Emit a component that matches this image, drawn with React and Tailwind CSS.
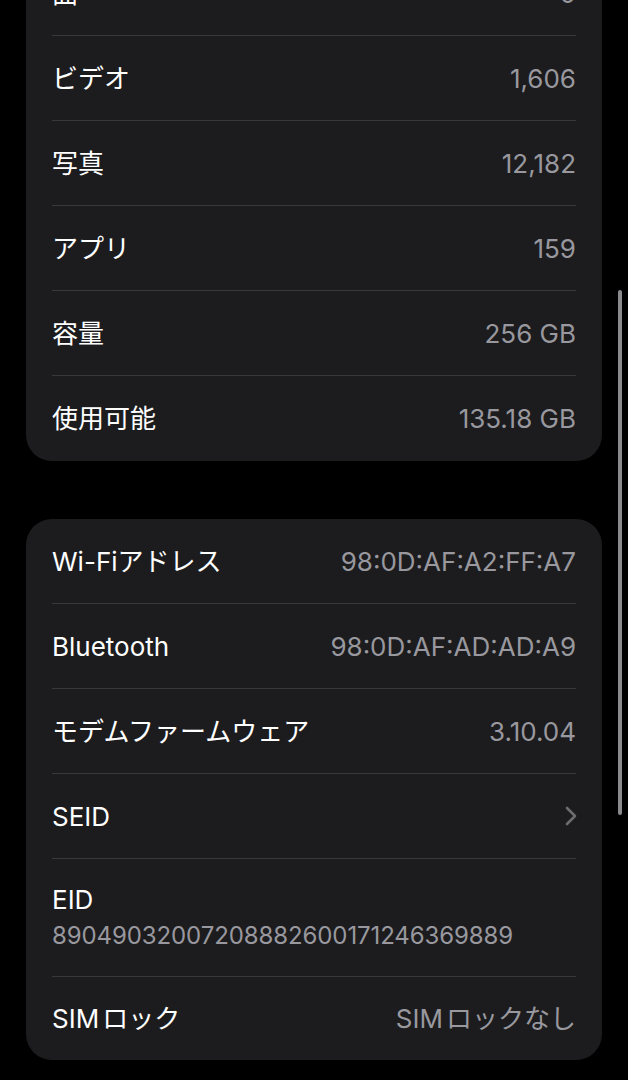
import React from "react";

const font = { fontFamily: "Inter, 'Noto Sans CJK JP', sans-serif" };

function Row({ label, value, chevron }) {
  return (
    <div className="flex items-center justify-between h-[85px] mx-[26px] border-b border-[#38383a]">
      <span className="text-white text-[26px]">{label}</span>
      {chevron ? (
        <svg width="14" height="22" viewBox="0 0 14 22" className="mr-[-2px]">
          <path d="M3 3 L11 11 L3 19" fill="none" stroke="#6b6b70" strokeWidth="2.6" strokeLinecap="round" strokeLinejoin="round" />
        </svg>
      ) : (
        <span className="text-[#98989e] text-[26px]">{value}</span>
      )}
    </div>
  );
}

export default function App() {
  return (
    <div className="relative w-[628px] h-[1080px] bg-black overflow-hidden" style={font}>
      <div className="mx-[26px] mt-[-89px] rounded-[26px] bg-[#1c1c1e]">
        <div className="pt-[40px]">
          <Row label="曲" value="0" />
          <Row label="ビデオ" value="1,606" />
          <Row label="写真" value="12,182" />
          <Row label="アプリ" value="159" />
          <Row label="容量" value="256 GB" />
          <div className="flex items-center justify-between h-[85px] mx-[26px]">
            <span className="text-white text-[26px]">使用可能</span>
            <span className="text-[#98989e] text-[26px]">135.18 GB</span>
          </div>
        </div>
      </div>

      <div className="mx-[26px] mt-[58px] rounded-[26px] bg-[#1c1c1e]">
        <Row label="Wi-Fiアドレス" value="98:0D:AF:A2:FF:A7" />
        <Row label="Bluetooth" value="98:0D:AF:AD:AD:A9" />
        <Row label="モデムファームウェア" value="3.10.04" />
        <Row label="SEID" chevron />
        <div className="flex flex-col justify-center h-[118px] mx-[26px] border-b border-[#38383a] pt-[2px]">
          <span className="text-white text-[26px] leading-[34px]">EID</span>
          <span className="text-[#98989e] text-[24px] leading-[38px] tracking-[-0.1px]">89049032007208882600171246369889</span>
        </div>
        <div className="flex items-center justify-between h-[83px] mx-[26px]">
          <span className="text-white text-[26px]">SIM<span className="ml-[3px]">ロック</span></span>
          <span className="text-[#98989e] text-[26px]">SIM<span className="ml-[3px]">ロックなし</span></span>
        </div>
      </div>

      <div className="absolute left-[618px] top-[290px] w-[4px] h-[525px] rounded-full bg-[#8a8a8c]" />
    </div>
  );
}
